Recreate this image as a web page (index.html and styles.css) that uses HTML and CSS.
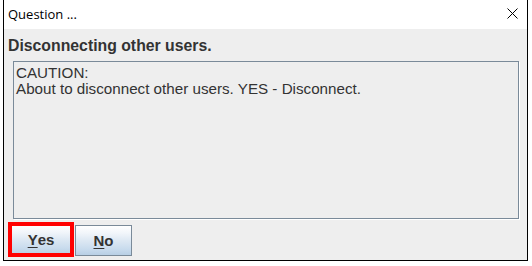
FILE: index.html
```html
<!DOCTYPE html>
<html>
<head>
<meta charset="utf-8">
<link rel="stylesheet" href="styles.css">
</head>
<body>
<div class="window">
  <div class="titlebar">
    <span class="title">Question ...</span>
    <svg class="close" width="11" height="11" viewBox="0 0 11 11"><path d="M0.5 0.5 L10.5 10.5 M10.5 0.5 L0.5 10.5" stroke="#000" stroke-width="1" fill="none"/></svg>
  </div>
  <div class="content">
    <div class="heading">Disconnecting other users.</div>
    <div class="message">
      <div class="line">CAUTION:</div>
      <div class="line">About to disconnect other users. YES - Disconnect.</div>
    </div>
    <div class="buttons">
      <div class="btn-wrap highlighted"><button class="btn btn-yes"><u>Y</u>es</button></div>
      <button class="btn btn-no"><u>N</u>o</button>
    </div>
  </div>
</div>
</body>
</html>
```

FILE: styles.css
```css
html, body {
  margin: 0;
  padding: 0;
  background: #ffffff;
  width: 532px;
  height: 266px;
  overflow: hidden;
}
.window {
  margin-left: 3px;
  width: 523px;
  height: 260px;
  border-left: 1px solid #000;
  border-right: 1px solid #000;
  border-bottom: 1px solid #000;
  display: flex;
  flex-direction: column;
  box-sizing: content-box;
}
.titlebar {
  height: 29px;
  flex: none;
  background: #fff;
  display: flex;
  align-items: flex-start;
  justify-content: space-between;
  padding-left: 4px;
  padding-right: 9px;
  box-sizing: border-box;
}
.title {
  font-family: "Open Sans", "Noto Sans", sans-serif;
  font-size: 13px;
  line-height: 16px;
  margin-top: 6px;
  color: #000;
}
.close {
  margin-top: 8px;
  display: block;
}
.content {
  flex: 1;
  background: #eeeeee;
  display: flex;
  flex-direction: column;
  padding: 8px 0 0 4px;
  font-family: "Liberation Sans", Arial, sans-serif;
}
.heading {
  font-weight: bold;
  font-size: 15.8px;
  line-height: 17px;
  color: #333333;
}
.message {
  margin: 7px 0 0 5px;
  width: 506px;
  height: 158px;
  box-sizing: border-box;
  border: 1px solid #7a8a99;
  box-shadow: 1px 1px 0 #ffffff;
  padding: 3px 0 0 2px;
  font-size: 15.2px;
  color: #333333;
}
.line {
  height: 15px;
  line-height: 15px;
}
.line + .line {
  margin-top: 0.5px;
}
.buttons {
  display: flex;
  align-items: flex-start;
  margin-top: 6px;
  margin-left: 0;
  gap: 1px;
}
.btn-wrap {
  position: relative;
  width: 66px;
  height: 35px;
  box-sizing: border-box;
  display: flex;
  align-items: center;
  justify-content: center;
  margin-top: -3px;
}
.highlighted::after {
  content: "";
  position: absolute;
  inset: 0;
  border: 4px solid #ff0000;
}
.btn {
  height: 31px;
  box-sizing: border-box;
  border: 1px solid #7a8a99;
  background: linear-gradient(to bottom, #ffffff 0%, #f1f5fa 25%, #dde8f3 50%, #c8dbed 80%, #b8cfe5 100%);
  font-family: "Liberation Sans", Arial, sans-serif;
  font-weight: bold;
  font-size: 15px;
  color: #333333;
  padding: 0;
  display: flex;
  align-items: center;
  justify-content: center;
}
.btn u {
  text-decoration-thickness: 1px;
  text-underline-offset: 2px;
}
.btn-yes {
  width: 60px;
}
.btn-no {
  width: 57px;
}
```
